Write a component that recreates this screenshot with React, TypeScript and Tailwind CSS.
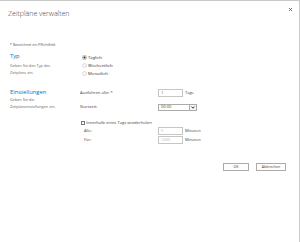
import React from "react";

function Radio({ checked, label }: { checked?: boolean; label: string }) {
  return (
    <div className="flex items-center h-[8px]">
      <svg width="5" height="5" viewBox="0 0 10 10" className="ml-[2px]">
        {checked ? <rect x="0.3" y="0.3" width="9.4" height="9.4" fill="none" stroke="#888" strokeWidth="0.6" strokeDasharray="1 1" /> : null}
        <circle cx="5" cy="5" r="3.8" fill="#fff" stroke={checked ? "#555" : "#999"} strokeWidth="0.8" />
        {checked ? <circle cx="5" cy="5" r="1.9" fill="#222" /> : null}
      </svg>
      <span className="ml-[1px] text-[4.3px] leading-[8px] text-[#333]">{label}</span>
    </div>
  );
}

function Field({ value, disabled }: { value: string; disabled?: boolean }) {
  return (
    <div
      className={
        "w-[25px] h-[8px] border-[0.6px] border-[#c6c6c6] bg-white pl-[2px] flex items-center text-[4px] " +
        (disabled ? "text-[#b8b8b8]" : "text-[#444]")
      }
    >
      {value}
    </div>
  );
}

export default function App() {
  return (
    <div className="w-[300px] h-[242px] bg-white border-t border-r border-[#c9c9c9] font-['Open_Sans',sans-serif] text-[#444] overflow-hidden">
      {/* header */}
      <div className="flex justify-between items-start pl-[8px] pr-[6px] pt-[8px]">
        <div className="text-[7px] font-light leading-[10px] text-[#444]">Zeitpläne verwalten</div>
        <svg width="5" height="5" viewBox="0 0 10 10" className="mt-[-2px]">
          <path d="M2 2 L8 8 M8 2 L2 8" stroke="#666" strokeWidth="1.8" />
        </svg>
      </div>

      <div className="pl-[10px]">
        {/* required note */}
        <div className="mt-[23px] text-[3.6px] leading-[5px] text-[#555]">
          <span className="text-[#bf0000]">*</span> Bezeichnet ein Pflichtfeld.
        </div>

        {/* Typ section */}
        <div className="mt-[6px] flex">
          <div className="w-[70px]">
            <div className="text-[5.8px] leading-[7px] text-[#0072c6]">Typ</div>
            <div className="mt-[3px] text-[3.8px] leading-[6.5px] text-[#666]">
              Geben Sie den Typ des
              <br />
              Zeitplans ein.
            </div>
          </div>
          <div className="flex flex-col">
            <Radio checked label="Täglich" />
            <Radio label="Wöchentlich" />
            <Radio label="Monatlich" />
          </div>
        </div>

        {/* Einstellungen section */}
        <div className="mt-[12px] flex">
          <div className="w-[70px]">
            <div className="text-[5.8px] leading-[7px] text-[#0072c6]">Einstellungen</div>
            <div className="mt-[1px] text-[3.8px] leading-[6.5px] text-[#666]">
              Geben Sie die
              <br />
              Zeitplaneinstellungen ein.
            </div>
          </div>
          <div className="flex flex-col">
            <div className="flex items-center h-[8px]">
              <div className="w-[78px] text-[4.2px] text-[#444]">
                Ausführen alle: <span className="text-[#bf0000]">*</span>
              </div>
              <Field value="1" />
              <div className="ml-[2px] text-[4px] text-[#444]">Tage</div>
            </div>
            <div className="mt-[6.5px] flex items-center h-[7.5px]">
              <div className="w-[78px] text-[4.2px] text-[#444]">Startzeit:</div>
              <div className="w-[39px] h-[7.5px] border-[0.6px] border-[#ababab] bg-white flex items-center">
                <div className="flex-1 pl-[2px] text-[4px] text-[#444]">00:00</div>
                <div className="w-[7px] h-full border-l-[0.6px] border-[#ababab] bg-[#f4f4f4] flex items-center justify-center">
                  <svg width="4" height="3" viewBox="0 0 8 6">
                    <path d="M1 1.2 L4 4.4 L7 1.2" stroke="#222" strokeWidth="1.8" fill="none" />
                  </svg>
                </div>
              </div>
            </div>
            <div className="mt-[8px] flex items-center h-[8px]">
              <span className="ml-[1px] w-[4px] h-[4px] border-[0.5px] border-[#777] bg-white" />
              <span className="ml-[1px] text-[4.2px] text-[#444]">Innerhalb eines Tags wiederholen</span>
            </div>
            <div className="flex items-center h-[8px]">
              <div className="w-[78px] pl-[4px] text-[4px] text-[#444]">Alle:</div>
              <Field value="5" disabled />
              <div className="ml-[2px] text-[4px] text-[#444]">Minuten</div>
            </div>
            <div className="mt-[1px] flex items-center h-[8px]">
              <div className="w-[78px] pl-[4px] text-[4px] text-[#444]">Für:</div>
              <Field value="1440" disabled />
              <div className="ml-[2px] text-[4px] text-[#444]">Minuten</div>
            </div>
          </div>
        </div>

        {/* buttons */}
        <div className="mt-[19px] flex justify-end gap-[7px] pr-[13px]">
          <div className="w-[26px] h-[8px] border-[0.6px] border-[#ababab] bg-[#fdfdfd] flex items-center justify-center text-[3.6px] text-[#444]">
            OK
          </div>
          <div className="w-[30px] h-[8px] border-[0.6px] border-[#ababab] bg-[#fdfdfd] flex items-center justify-center text-[3.6px] text-[#444]">
            Abbrechen
          </div>
        </div>
      </div>
    </div>
  );
}
